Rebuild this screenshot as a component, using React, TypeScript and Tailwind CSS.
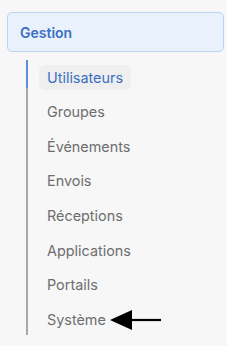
import React from 'react';

const items = ['Utilisateurs', 'Groupes', 'Événements', 'Envois', 'Réceptions', 'Applications', 'Portails', 'Système'];

function ArrowLeft() {
  return (
    <svg width="52" height="22" viewBox="0 0 52 22" className="-ml-[4px]">
      <polygon points="0,11 22,1 22,21" fill="#000" />
      <line x1="20" y1="11" x2="51" y2="11" stroke="#000" strokeWidth="2.2" />
    </svg>
  );
}

export default function App() {
  return (
    <div className="w-[227px] h-[346px] bg-[#f7f7f7] pt-[12px] px-[7px] font-['Inter',sans-serif]">
      <div className="h-[40px] w-[217px] rounded-[5px] border border-[#b9d3f5] bg-[#e9f1fc] flex items-center pl-[12px]">
        <span className="text-[14px] font-semibold text-[#3b6fc2]">Gestion</span>
      </div>

      <div className="mt-[8px] ml-[19px] flex">
        <div className="w-[2px] flex flex-col">
          <div className="h-[28px] bg-[#5b8fde]" />
          <div className="h-[247px] bg-[#a7a7a7]" />
        </div>
        <ul className="ml-[11px] flex flex-col gap-[9.6px] pt-[5px]">
          {items.map((item, i) => (
            <li key={item} className="flex items-center">
              <span
                className={`h-[25px] flex items-center px-[8px] rounded-[6px] text-[14.4px] ${
                  i === 0 ? 'bg-[#efefef] text-[#3b6fc2]' : 'text-[#6e6e6e]'
                }`}
              >
                {item}
              </span>
              {item === 'Système' && <ArrowLeft />}
            </li>
          ))}
        </ul>
      </div>
    </div>
  );
}
